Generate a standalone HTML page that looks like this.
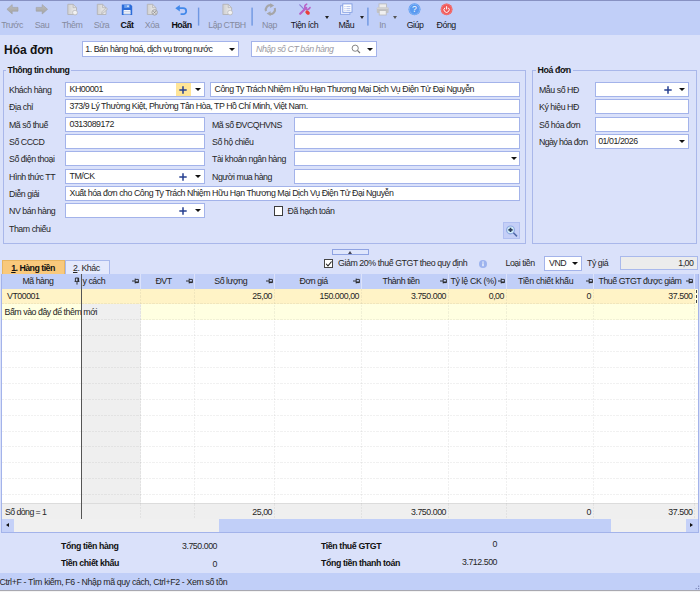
<!DOCTYPE html>
<html lang="vi">
<head>
<meta charset="utf-8">
<title>Hóa đơn</title>
<style>
*{box-sizing:border-box;margin:0;padding:0}
html,body{width:700px;height:592px;overflow:hidden}
body{position:relative;background:#dae1fa;font-family:"Liberation Sans",sans-serif;font-size:8.8px;letter-spacing:-0.46px;color:#262626;line-height:10px}
.a{position:absolute;white-space:nowrap}
.tb{position:absolute;left:0;top:0;width:700px;height:35px;background:#c1cff8}
.tb .l{position:absolute;top:20px;height:10px;width:50px;margin-left:-25px;text-align:center;white-space:nowrap}
.tb .d{color:#858a9e}
.tb .k{color:#15151c}
.tb .e{color:#0c0c10;font-weight:bold;letter-spacing:-0.45px}
.ar{position:absolute;width:0;height:0;border-left:2.5px solid transparent;border-right:2.5px solid transparent;border-top:3px solid #222}
.in{position:absolute;background:#fff;border:1px solid #a3b3ea;height:15px;line-height:13px;padding-left:3.5px;white-space:nowrap;overflow:hidden}
.lb{position:absolute;white-space:nowrap;height:10px;line-height:10px}
.gb{position:absolute;border:1px solid #a9b7ea}
.gt{position:absolute;top:-6px;left:3px;background:#dae1fa;padding:0 2px;font-weight:bold;letter-spacing:-0.4px;white-space:nowrap;color:#111}
.dd{position:absolute;width:0;height:0;border-left:3px solid transparent;border-right:3px solid transparent;border-top:3px solid #111}
.cb{position:absolute;width:9.5px;height:9.5px;border:1px solid #3c3c3c;background:#fff}
.b{font-weight:bold;letter-spacing:-0.4px;color:#111}
.r{text-align:right}
.hd{position:absolute;top:274px;height:14px;line-height:13px;text-align:center;white-space:nowrap;border-right:1px solid #dfe5fb;color:#222}
.c{position:absolute;height:15px;line-height:15px;white-space:nowrap;text-align:right}
</style>
</head>
<body>

<div class="tb">
<div class="a" style="left:0;top:0;width:700px;height:1px;background:#8791c2"></div>
<span class="l d" style="left:12px">Trước</span>
<span class="l d" style="left:42px">Sau</span>
<span class="l d" style="left:72px">Thêm</span>
<span class="l d" style="left:101.5px">Sửa</span>
<span class="l e" style="left:127px">Cất</span>
<span class="l d" style="left:152px">Xóa</span>
<span class="l e" style="left:181.5px">Hoãn</span>
<span class="l d" style="left:227px">Lập CTBH</span>
<span class="l d" style="left:269.5px">Nạp</span>
<span class="l k" style="left:304.5px">Tiện ích</span>
<span class="l k" style="left:346.3px">Mẫu</span>
<span class="l d" style="left:382.5px">In</span>
<span class="l k" style="left:415px">Giúp</span>
<span class="l k" style="left:446.2px">Đóng</span>
<span class="ar" style="left:324.6px;top:16px;border-top-color:#222"></span>
<span class="ar" style="left:360.1px;top:16px;border-top-color:#222"></span>
<span class="ar" style="left:392.9px;top:16px;border-top-color:#555"></span>
<svg class="a" style="left:0;top:0" width="700" height="35" viewBox="0 0 700 35"><defs><linearGradient id="ga" x1="0" y1="0" x2="0" y2="1"><stop offset="0" stop-color="#bdbdbd"/><stop offset="1" stop-color="#a3a3a3"/></linearGradient><linearGradient id="gd" x1="0" y1="0" x2="1" y2="0"><stop offset="0" stop-color="#cfcfd0"/><stop offset="1" stop-color="#f0f0f0"/></linearGradient></defs><polygon points="6.9,9.3 12.2,4.6 12.2,7.4 18,7.4 18,11.2 12.2,11.2 12.2,14" fill="url(#ga)" stroke="#a0a0a0" stroke-width="0.6"/><polygon points="47.6,9.3 42.2,4.6 42.2,7.4 36.2,7.4 36.2,11.2 42.2,11.2 42.2,14" fill="url(#ga)" stroke="#a0a0a0" stroke-width="0.6"/><path d="M67.8,4.3 h5.3 l3.4,3.4 v6.8 h-8.7 z" fill="url(#gd)" stroke="#b3b3b6" stroke-width="0.9"/><path d="M73.1,4.3 v3.4 h3.4" fill="none" stroke="#b3b3b6" stroke-width="0.8"/><circle cx="75" cy="12.6" r="2.4" fill="#f2f2f2" stroke="#b9b9bc" stroke-width="0.8"/><path d="M97.3,4.3 h5.3 l3.4,3.4 v6.8 h-8.7 z" fill="url(#gd)" stroke="#b3b3b6" stroke-width="0.9"/><path d="M102.6,4.3 v3.4 h3.4" fill="none" stroke="#b3b3b6" stroke-width="0.8"/><path d="M101.5,13.6 l0.6,-2 l4,-4 l1.4,1.4 l-4,4 z" fill="#dcdcdc" stroke="#b0b0b3" stroke-width="0.7"/><path d="M121.8,4.4 h8.8 l1.6,1.6 v9 h-10.4 z" fill="#2c6cd8"/><rect x="124.2" y="4.9" width="5.4" height="3" fill="#6fa2ee"/><rect x="127.4" y="5.4" width="1.2" height="1.6" fill="#fff"/><rect x="123.6" y="10" width="6.9" height="4.4" fill="#f4f7ff"/><rect x="123.6" y="11.4" width="6.9" height="0.8" fill="#b9c6dc"/><rect x="123.6" y="13" width="6.9" height="0.7" fill="#c9d4e6"/><path d="M147.3,4.3 h5.3 l3.4,3.4 v6.8 h-8.7 z" fill="url(#gd)" stroke="#b3b3b6" stroke-width="0.9"/><path d="M152.60000000000002,4.3 v3.4 h3.4" fill="none" stroke="#b3b3b6" stroke-width="0.8"/><circle cx="154.6" cy="12.4" r="2.7" fill="#dedede" stroke="#9a9a9e" stroke-width="0.9"/><path d="M153.4,11.2 l2.4,2.4 M155.8,11.2 l-2.4,2.4" stroke="#8c8c90" stroke-width="0.9"/><path d="M179,8.2 H183.2 a3,3 0 0 1 0,6 H180.6" fill="none" stroke="#4289ea" stroke-width="1.8"/><polygon points="175.3,8.2 179.8,5 179.8,11.4" fill="#4289ea"/><path d="M222.9,4.3 h5.3 l3.4,3.4 v6.8 h-8.7 z" fill="url(#gd)" stroke="#b3b3b6" stroke-width="0.9"/><path d="M228.20000000000002,4.3 v3.4 h3.4" fill="none" stroke="#b3b3b6" stroke-width="0.8"/><circle cx="230.1" cy="12.6" r="2.4" fill="#f2f2f2" stroke="#b9b9bc" stroke-width="0.8"/><g fill="none" stroke="#a6a6a8" stroke-width="2.1"><path d="M266,11.2 a4.6,4.6 0 0 1 5.2,-6"/><path d="M274.8,8 a4.6,4.6 0 0 1 -5.2,6"/></g><polygon points="270.2,3.2 274.2,5.6 270.2,8" fill="#a6a6a8"/><polygon points="270.6,16 266.6,13.6 270.6,11.2" fill="#a6a6a8"/><g stroke-linecap="round" fill="none"><path d="M299.8,4.8 L304.6,9.8" stroke="#8f7fd8" stroke-width="1.2"/><path d="M300.2,13.8 L306.2,7.8" stroke="#b862c8" stroke-width="2.2"/><path d="M306.6,4.2 a2.7,2.7 0 1 0 3.4,3.4" stroke="#b862c8" stroke-width="1.7"/></g><ellipse cx="307.6" cy="12.6" rx="2.5" ry="1.8" transform="rotate(40 307.6 12.6)" fill="#ea3f3a"/><rect x="340.5" y="5.8" width="9.4" height="8.6" fill="#e6ecff" stroke="#8ea6e6" stroke-width="0.9"/><rect x="342.8" y="3.9" width="9.2" height="8.4" fill="#fff" stroke="#7f9be0" stroke-width="0.9"/><path d="M344.4,6.6 h1.1 M346.4,6.6 h4 M344.4,8.6 h1.1 M346.4,8.6 h4 M344.4,10.4 h1.1 M346.4,10.4 h4" stroke="#a3b6ea" stroke-width="0.8"/><rect x="379" y="3.9" width="7.4" height="4.4" fill="#ececec" stroke="#b8b8ba" stroke-width="0.8"/><rect x="376.8" y="7.4" width="11.8" height="5.6" rx="1" fill="#c2c2c4"/><rect x="376.8" y="7.4" width="11.8" height="1.6" rx="0.8" fill="#d2d2d4"/><rect x="379.2" y="10.6" width="7" height="4.4" fill="#f0f0f0" stroke="#b8b8ba" stroke-width="0.8"/><circle cx="414.5" cy="9.3" r="6" fill="#5a9af0"/><circle cx="414.5" cy="9.3" r="5.1" fill="none" stroke="#86b6f6" stroke-width="0.9"/><text x="414.5" y="12.3" font-family="Liberation Sans, sans-serif" font-size="8.6" fill="#fff" text-anchor="middle" letter-spacing="0">?</text><circle cx="446.6" cy="9.3" r="5.9" fill="#f05a5a"/><circle cx="446.6" cy="9.3" r="5.1" fill="none" stroke="#f47c7c" stroke-width="0.8"/><path d="M444.9,7.8 a2.6,2.6 0 1 0 3.4,0" fill="none" stroke="#fff" stroke-width="1"/><path d="M446.6,6.2 v3.2" stroke="#fff" stroke-width="1"/><rect x="197.9" y="7.6" width="1.4" height="18" fill="#6f97e2"/><rect x="251.4" y="7.6" width="1.4" height="18" fill="#6f97e2"/><rect x="367.2" y="7.6" width="1.4" height="18" fill="#6f97e2"/></svg>
</div>
<div class="a" style="left:4px;top:40.5px;font-size:12px;font-weight:bold;letter-spacing:0;line-height:18px;color:#111">Hóa đơn</div>
<div class="in" style="left:82px;top:41px;width:157px;height:16px;line-height:14px;padding-left:2.3px">1. Bán hàng hoá, dịch vụ trong nước</div>
<span class="dd" style="left:228.5px;top:47.5px"></span>
<div class="in" style="left:251px;top:41px;width:126px;height:16px;line-height:14px;color:#9a9aa3;font-style:italic;padding-left:4px">Nhập số CT bán hàng</div>
<svg class="a" style="left:350px;top:43px" width="12" height="12" viewBox="0 0 12 12"><circle cx="5.2" cy="5.2" r="3.1" fill="none" stroke="#777" stroke-width="0.9"/><path d="M7.5,7.5 L10,10" stroke="#777" stroke-width="1.1"/></svg>
<span class="dd" style="left:367px;top:47.5px"></span>
<div class="gb" style="left:3px;top:70px;width:523px;height:174px"><span class="gt" style="left:1.5px;letter-spacing:-0.47px">Thông tin chung</span></div>
<div class="gb" style="left:532px;top:70px;width:165px;height:174px"><span class="gt" style="left:2.5px">Hoá đơn</span></div>
<span class="lb" style="left:9px;top:84.5px">Khách hàng</span>
<div class="in" style="left:65px;top:82px;width:140px">KH00001</div>
<div class="a" style="left:176px;top:83px;width:14.5px;height:13px;background:#ffe597"></div>
<svg class="a" style="left:179.3px;top:85.5px" width="8" height="8" viewBox="0 0 8 8"><path d="M0.3,4 h7.4 M4,0.3 v7.4" stroke="#263f90" stroke-width="1.5" fill="none"/></svg>
<span class="dd" style="left:194.7px;top:88px"></span>
<div class="in" style="left:210px;top:82px;width:310px">Công Ty Trách Nhiệm Hữu Hạn Thương Mại Dịch Vụ Điện Tử Đại Nguyễn</div>
<span class="lb" style="left:9px;top:101.5px">Địa chỉ</span>
<div class="in" style="left:65px;top:99px;width:455px;letter-spacing:-0.49px">373/9 Lý Thường Kiệt, Phường Tân Hòa, TP Hồ Chí Minh, Việt Nam.</div>
<span class="lb" style="left:9px;top:119.5px">Mã số thuế</span>
<div class="in" style="left:65px;top:117px;width:140px">0313089172</div>
<span class="lb" style="left:212px;top:119.5px">Mã số ĐVCQHVNS</span>
<div class="in" style="left:294px;top:117px;width:226px"></div>
<span class="lb" style="left:9px;top:136.5px">Số CCCD</span>
<div class="in" style="left:65px;top:134px;width:140px"></div>
<span class="lb" style="left:212px;top:136.5px">Số hộ chiếu</span>
<div class="in" style="left:294px;top:134px;width:226px"></div>
<span class="lb" style="left:9px;top:153.5px">Số điện thoại</span>
<div class="in" style="left:65px;top:151px;width:140px"></div>
<span class="lb" style="left:212px;top:153.5px">Tài khoản ngân hàng</span>
<div class="in" style="left:294px;top:151px;width:226px"></div>
<span class="dd" style="left:511px;top:157px"></span>
<span class="lb" style="left:9px;top:171.5px">Hình thức TT</span>
<div class="in" style="left:65px;top:169px;width:140px">TM/CK</div>
<svg class="a" style="left:179.3px;top:172.5px" width="8" height="8" viewBox="0 0 8 8"><path d="M0.3,4 h7.4 M4,0.3 v7.4" stroke="#263f90" stroke-width="1.5" fill="none"/></svg>
<span class="dd" style="left:194.7px;top:175px"></span>
<span class="lb" style="left:212px;top:171.5px">Người mua hàng</span>
<div class="in" style="left:294px;top:169px;width:226px"></div>
<span class="lb" style="left:9px;top:188.5px">Diễn giải</span>
<div class="in" style="left:65px;top:186px;width:455px">Xuất hóa đơn cho Công Ty Trách Nhiệm Hữu Hạn Thương Mại Dịch Vụ Điện Tử Đại Nguyễn</div>
<span class="lb" style="left:9px;top:205.5px">NV bán hàng</span>
<div class="in" style="left:65px;top:203px;width:140px"></div>
<svg class="a" style="left:179.3px;top:206.5px" width="8" height="8" viewBox="0 0 8 8"><path d="M0.3,4 h7.4 M4,0.3 v7.4" stroke="#263f90" stroke-width="1.5" fill="none"/></svg>
<span class="dd" style="left:194.7px;top:209px"></span>
<span class="cb" style="left:273.7px;top:206.3px"></span>
<span class="lb" style="left:287.5px;top:206px">Đã hạch toán</span>
<span class="lb" style="left:9px;top:223.5px">Tham chiếu</span>
<div class="a" style="left:503px;top:222px;width:17px;height:17px;background:#c5cff7;border:1px solid #b1bff1"></div>
<svg class="a" style="left:505px;top:223.5px" width="13" height="13" viewBox="0 0 13 13"><circle cx="5.5" cy="5.9" r="3.9" fill="#d4f0fa" stroke="#8ea8e2" stroke-width="1.2"/><path d="M3.4,5.9 h4.2 M5.5,3.8 v4.2" stroke="#2a3a58" stroke-width="1.7"/><path d="M8.4,8.8 L12,12.4" stroke="#5068a8" stroke-width="1.5"/></svg>
<span class="lb" style="left:539px;top:84.5px">Mẫu số HĐ</span>
<div class="in" style="left:595px;top:82px;width:94px"></div>
<svg class="a" style="left:664px;top:85.5px" width="8" height="8" viewBox="0 0 8 8"><path d="M0.3,4 h7.4 M4,0.3 v7.4" stroke="#263f90" stroke-width="1.5" fill="none"/></svg>
<span class="dd" style="left:679px;top:88px"></span>
<span class="lb" style="left:539px;top:101.5px">Ký hiệu HĐ</span>
<div class="in" style="left:595px;top:99px;width:94px"></div>
<span class="lb" style="left:539px;top:119.5px">Số hóa đơn</span>
<div class="in" style="left:595px;top:117px;width:94px"></div>
<span class="lb" style="left:539px;top:136.5px;letter-spacing:-0.6px">Ngày hóa đơn</span>
<div class="in" style="left:595px;top:134px;width:94px;padding-left:2.2px">01/01/2026</div>
<span class="dd" style="left:679px;top:140px"></span>
<div class="a" style="left:332px;top:249px;width:36.5px;height:6px;border:1px solid #8fa3e2;background:#dfe6fc"></div>
<span class="a" style="left:347.5px;top:250.5px;width:0;height:0;border-left:2.5px solid transparent;border-right:2.5px solid transparent;border-bottom:3px solid #445"></span>
<div class="a" style="left:2px;top:260px;width:62.5px;height:14px;background:#f9c97c;border:1px solid #e8b560;border-bottom:0"></div>
<span class="lb b" style="left:11.2px;top:262.5px;letter-spacing:-0.52px"><span style="text-decoration:underline">1</span>. Hàng tiền</span>
<div class="a" style="left:64.5px;top:260px;width:45px;height:14px;background:#e4e9fc;border:1px solid #a9b9ec;border-bottom:0"></div>
<span class="lb" style="left:73px;top:262.5px"><span style="text-decoration:underline">2</span>. Khác</span>
<span class="cb" style="left:323.6px;top:258.5px;border-color:#444"></span>
<svg class="a" style="left:323.6px;top:258.5px" width="9.5" height="9.5" viewBox="0 0 10 10"><path d="M2.2,5 L4.2,7.2 L8,2.6" fill="none" stroke="#222" stroke-width="1.1"/></svg>
<span class="lb" style="left:338px;top:258px;letter-spacing:-0.42px">Giảm 20% thuế GTGT theo quy định</span>
<svg class="a" style="left:478px;top:259px" width="10" height="10" viewBox="0 0 10 10"><circle cx="5" cy="5" r="4" fill="#9db3ee"/><rect x="4.4" y="4.3" width="1.2" height="2.9" fill="#fff"/><rect x="4.4" y="2.5" width="1.2" height="1.2" fill="#fff"/></svg>
<span class="lb" style="left:505.5px;top:258px">Loại tiền</span>
<div class="in" style="left:544px;top:255.5px;width:38px;height:15px;padding-left:4px">VND</div>
<span class="dd" style="left:571.5px;top:261.5px"></span>
<span class="lb" style="left:587px;top:258px">Tỷ giá</span>
<div class="in r" style="left:619.5px;top:255.5px;width:78px;height:14.5px;background:#ececec;padding-right:3px;border-color:#a9b9ec">1,00</div>
<div class="a" style="left:1px;top:274px;width:698px;height:259px;background:#fff;border:1px solid #a3b3ea;border-top:0"></div>
<div class="a" style="left:2px;top:274px;width:696px;height:15px;background:#c1cff8"></div>
<div class="a" style="left:2px;top:289px;width:696px;height:15px;background:#fff3c6"></div>
<div class="a" style="left:2px;top:303.8px;width:696px;height:15.9px;background:#ffffe1"></div>
<div class="a" style="left:81.5px;top:303.8px;width:59.0px;height:199.2px;background:#efefef"></div>
<div class="a" style="left:2px;top:503px;width:696px;height:16px;background:#efefef;border-top:1px solid #dcdcdc"></div>
<div class="a" style="left:2px;top:303.3px;width:696px;height:1px;background:repeating-linear-gradient(90deg,rgba(90,90,90,.085) 0 2.2px,transparent 2.2px 3.2px)"></div>
<div class="a" style="left:2px;top:319.2px;width:696px;height:1px;background:repeating-linear-gradient(90deg,rgba(90,90,90,.085) 0 2.2px,transparent 2.2px 3.2px)"></div>
<div class="a" style="left:2px;top:335.1px;width:696px;height:1px;background:repeating-linear-gradient(90deg,rgba(90,90,90,.085) 0 2.2px,transparent 2.2px 3.2px)"></div>
<div class="a" style="left:2px;top:351.0px;width:696px;height:1px;background:repeating-linear-gradient(90deg,rgba(90,90,90,.085) 0 2.2px,transparent 2.2px 3.2px)"></div>
<div class="a" style="left:2px;top:366.90000000000003px;width:696px;height:1px;background:repeating-linear-gradient(90deg,rgba(90,90,90,.085) 0 2.2px,transparent 2.2px 3.2px)"></div>
<div class="a" style="left:2px;top:382.8px;width:696px;height:1px;background:repeating-linear-gradient(90deg,rgba(90,90,90,.085) 0 2.2px,transparent 2.2px 3.2px)"></div>
<div class="a" style="left:2px;top:398.70000000000005px;width:696px;height:1px;background:repeating-linear-gradient(90deg,rgba(90,90,90,.085) 0 2.2px,transparent 2.2px 3.2px)"></div>
<div class="a" style="left:2px;top:414.6px;width:696px;height:1px;background:repeating-linear-gradient(90deg,rgba(90,90,90,.085) 0 2.2px,transparent 2.2px 3.2px)"></div>
<div class="a" style="left:2px;top:430.5px;width:696px;height:1px;background:repeating-linear-gradient(90deg,rgba(90,90,90,.085) 0 2.2px,transparent 2.2px 3.2px)"></div>
<div class="a" style="left:2px;top:446.4px;width:696px;height:1px;background:repeating-linear-gradient(90deg,rgba(90,90,90,.085) 0 2.2px,transparent 2.2px 3.2px)"></div>
<div class="a" style="left:2px;top:462.3px;width:696px;height:1px;background:repeating-linear-gradient(90deg,rgba(90,90,90,.085) 0 2.2px,transparent 2.2px 3.2px)"></div>
<div class="a" style="left:2px;top:478.20000000000005px;width:696px;height:1px;background:repeating-linear-gradient(90deg,rgba(90,90,90,.085) 0 2.2px,transparent 2.2px 3.2px)"></div>
<div class="a" style="left:2px;top:494.1px;width:696px;height:1px;background:repeating-linear-gradient(90deg,rgba(90,90,90,.085) 0 2.2px,transparent 2.2px 3.2px)"></div>
<div class="a" style="left:140.0px;top:289px;width:1px;height:230px;background:repeating-linear-gradient(180deg,rgba(90,90,90,.085) 0 2.2px,transparent 2.2px 3.2px)"></div>
<div class="a" style="left:194.0px;top:289px;width:1px;height:230px;background:repeating-linear-gradient(180deg,rgba(90,90,90,.085) 0 2.2px,transparent 2.2px 3.2px)"></div>
<div class="a" style="left:274.0px;top:289px;width:1px;height:230px;background:repeating-linear-gradient(180deg,rgba(90,90,90,.085) 0 2.2px,transparent 2.2px 3.2px)"></div>
<div class="a" style="left:360.7px;top:289px;width:1px;height:230px;background:repeating-linear-gradient(180deg,rgba(90,90,90,.085) 0 2.2px,transparent 2.2px 3.2px)"></div>
<div class="a" style="left:447.8px;top:289px;width:1px;height:230px;background:repeating-linear-gradient(180deg,rgba(90,90,90,.085) 0 2.2px,transparent 2.2px 3.2px)"></div>
<div class="a" style="left:505.9px;top:289px;width:1px;height:230px;background:repeating-linear-gradient(180deg,rgba(90,90,90,.085) 0 2.2px,transparent 2.2px 3.2px)"></div>
<div class="a" style="left:593.2px;top:289px;width:1px;height:230px;background:repeating-linear-gradient(180deg,rgba(90,90,90,.085) 0 2.2px,transparent 2.2px 3.2px)"></div>
<div class="a" style="left:694.0px;top:289px;width:1px;height:230px;background:repeating-linear-gradient(180deg,rgba(90,90,90,.085) 0 2.2px,transparent 2.2px 3.2px)"></div>
<div class="a" style="left:139.8px;top:274px;width:1.4px;height:15px;background:#dbe2fb"></div>
<div class="a" style="left:193.8px;top:274px;width:1.4px;height:15px;background:#dbe2fb"></div>
<div class="a" style="left:273.8px;top:274px;width:1.4px;height:15px;background:#dbe2fb"></div>
<div class="a" style="left:360.5px;top:274px;width:1.4px;height:15px;background:#dbe2fb"></div>
<div class="a" style="left:447.6px;top:274px;width:1.4px;height:15px;background:#dbe2fb"></div>
<div class="a" style="left:505.7px;top:274px;width:1.4px;height:15px;background:#dbe2fb"></div>
<div class="a" style="left:593.0px;top:274px;width:1.4px;height:15px;background:#dbe2fb"></div>
<div class="a" style="left:693.8px;top:274px;width:1.4px;height:15px;background:#dbe2fb"></div>
<div class="a" style="left:81px;top:274px;width:1px;height:245px;background:#555"></div>
<span class="lb" style="left:-2.1000000000000014px;width:80px;text-align:center;top:276px;color:#222">Mã hàng</span>
<svg class="a" style="left:74px;top:277px" width="6" height="8" viewBox="0 0 6 8"><path d="M3,4.6 v3" stroke="#222" stroke-width="0.9"/><path d="M0.6,4.4 h4.8 M1.4,4.4 v-3.4 h3.2 v3.4" fill="none" stroke="#222" stroke-width="0.9"/><path d="M4.1,1 v3.4" stroke="#222" stroke-width="1.2"/></svg>
<span class="lb" style="left:82.5px;top:276px;color:#222">y cách</span>
<svg class="a" style="left:132.4px;top:278px" width="7" height="6" viewBox="0 0 7 6"><path d="M0,3 h3" stroke="#222" stroke-width="0.9"/><path d="M3.2,0.6 v4.8 M3.2,1.4 h3.2 v3.2 h-3.2" fill="none" stroke="#222" stroke-width="0.9"/><path d="M3.2,4.1 h3.2" stroke="#222" stroke-width="1.2"/></svg>
<span class="lb" style="left:123.5px;width:80px;text-align:center;top:276px;color:#222">ĐVT</span>
<svg class="a" style="left:186.4px;top:278px" width="7" height="6" viewBox="0 0 7 6"><path d="M0,3 h3" stroke="#222" stroke-width="0.9"/><path d="M3.2,0.6 v4.8 M3.2,1.4 h3.2 v3.2 h-3.2" fill="none" stroke="#222" stroke-width="0.9"/><path d="M3.2,4.1 h3.2" stroke="#222" stroke-width="1.2"/></svg>
<span class="lb" style="left:190.7px;width:80px;text-align:center;top:276px;color:#222">Số lượng</span>
<svg class="a" style="left:266.4px;top:278px" width="7" height="6" viewBox="0 0 7 6"><path d="M0,3 h3" stroke="#222" stroke-width="0.9"/><path d="M3.2,0.6 v4.8 M3.2,1.4 h3.2 v3.2 h-3.2" fill="none" stroke="#222" stroke-width="0.9"/><path d="M3.2,4.1 h3.2" stroke="#222" stroke-width="1.2"/></svg>
<span class="lb" style="left:273.6px;width:80px;text-align:center;top:276px;color:#222">Đơn giá</span>
<svg class="a" style="left:353.09999999999997px;top:278px" width="7" height="6" viewBox="0 0 7 6"><path d="M0,3 h3" stroke="#222" stroke-width="0.9"/><path d="M3.2,0.6 v4.8 M3.2,1.4 h3.2 v3.2 h-3.2" fill="none" stroke="#222" stroke-width="0.9"/><path d="M3.2,4.1 h3.2" stroke="#222" stroke-width="1.2"/></svg>
<span class="lb" style="left:361px;width:80px;text-align:center;top:276px;color:#222">Thành tiền</span>
<svg class="a" style="left:440.2px;top:278px" width="7" height="6" viewBox="0 0 7 6"><path d="M0,3 h3" stroke="#222" stroke-width="0.9"/><path d="M3.2,0.6 v4.8 M3.2,1.4 h3.2 v3.2 h-3.2" fill="none" stroke="#222" stroke-width="0.9"/><path d="M3.2,4.1 h3.2" stroke="#222" stroke-width="1.2"/></svg>
<span class="lb" style="left:450.4px;top:276px;color:#222;letter-spacing:-0.33px">Tỷ lệ CK (%)</span>
<svg class="a" style="left:498.29999999999995px;top:278px" width="7" height="6" viewBox="0 0 7 6"><path d="M0,3 h3" stroke="#222" stroke-width="0.9"/><path d="M3.2,0.6 v4.8 M3.2,1.4 h3.2 v3.2 h-3.2" fill="none" stroke="#222" stroke-width="0.9"/><path d="M3.2,4.1 h3.2" stroke="#222" stroke-width="1.2"/></svg>
<span class="lb" style="left:505.70000000000005px;width:80px;text-align:center;top:276px;color:#222;letter-spacing:-0.28px">Tiền chiết khấu</span>
<svg class="a" style="left:585.6px;top:278px" width="7" height="6" viewBox="0 0 7 6"><path d="M0,3 h3" stroke="#222" stroke-width="0.9"/><path d="M3.2,0.6 v4.8 M3.2,1.4 h3.2 v3.2 h-3.2" fill="none" stroke="#222" stroke-width="0.9"/><path d="M3.2,4.1 h3.2" stroke="#222" stroke-width="1.2"/></svg>
<span class="lb" style="left:598.5px;top:276px;color:#222">Thuế GTGT được giảm</span>
<svg class="a" style="left:686.4px;top:278px" width="7" height="6" viewBox="0 0 7 6"><path d="M0,3 h3" stroke="#222" stroke-width="0.9"/><path d="M3.2,0.6 v4.8 M3.2,1.4 h3.2 v3.2 h-3.2" fill="none" stroke="#222" stroke-width="0.9"/><path d="M3.2,4.1 h3.2" stroke="#222" stroke-width="1.2"/></svg>
<span class="lb" style="left:7px;top:291.3px">VT00001</span>
<span class="lb r" style="left:172px;width:100px;top:291.3px">25,00</span>
<span class="lb r" style="left:259px;width:100px;top:291.3px">150.000,00</span>
<span class="lb r" style="left:346px;width:100px;top:291.3px">3.750.000</span>
<span class="lb r" style="left:404px;width:100px;top:291.3px">0,00</span>
<span class="lb r" style="left:491px;width:100px;top:291.3px">0</span>
<span class="lb r" style="left:592.5px;width:100px;top:291.3px">37.500</span>
<div class="a" style="left:694.5px;top:289px;width:3.5px;height:15px;background:#ffffe1"></div>
<div class="a" style="left:694.5px;top:274px;width:3.5px;height:15px;background:#b9c7f5"></div>
<div class="a" style="left:695.6px;top:290px;width:0;height:13px;border-left:1px dashed #444"></div>
<span class="lb" style="left:4.5px;top:307.1px">Bấm vào đây để thêm mới</span>
<span class="lb" style="left:5px;top:506.5px;letter-spacing:-0.58px">Số dòng = 1</span>
<span class="lb r" style="left:172px;width:100px;top:506.5px">25,00</span>
<span class="lb r" style="left:346px;width:100px;top:506.5px">3.750.000</span>
<span class="lb r" style="left:491px;width:100px;top:506.5px">0</span>
<span class="lb r" style="left:592.5px;width:100px;top:506.5px">37.500</span>
<div class="a" style="left:2px;top:519px;width:696px;height:13px;background:#f0f0f0"></div>
<div class="a" style="left:2px;top:519px;width:12px;height:13px;background:#c5d1f8"></div>
<div class="a" style="left:686px;top:519px;width:12px;height:13px;background:#c5d1f8"></div>
<div class="a" style="left:218.5px;top:519px;width:392.5px;height:13px;background:#c1cff8"></div>
<span class="a" style="left:6.4px;top:523.2px;width:0;height:0;border-top:2.7px solid transparent;border-bottom:2.7px solid transparent;border-right:3.5px solid #111"></span>
<span class="a" style="left:690.3px;top:523.2px;width:0;height:0;border-top:2.7px solid transparent;border-bottom:2.7px solid transparent;border-left:3.5px solid #111"></span>
<span class="lb b" style="left:61px;top:540.5px">Tổng tiền hàng</span>
<span class="lb r" style="left:117px;width:100px;top:541px">3.750.000</span>
<span class="lb b" style="left:61px;top:557.5px">Tiền chiết khấu</span>
<span class="lb r" style="left:117px;width:100px;top:559px">0</span>
<span class="lb b" style="left:321px;top:540.5px">Tiền thuế GTGT</span>
<span class="lb r" style="left:397px;width:100px;top:538.5px">0</span>
<span class="lb b" style="left:321px;top:557.5px">Tổng tiền thanh toán</span>
<span class="lb r" style="left:397px;width:100px;top:557px">3.712.500</span>
<div class="a" style="left:0;top:573px;width:700px;height:17px;background:#c1cff8"></div>
<span class="lb" style="left:-0.5px;top:577px;letter-spacing:-0.37px">Ctrl+F - Tìm kiếm, F6 - Nhập mã quy cách, Ctrl+F2 - Xem số tồn</span>
<div class="a" style="left:0;top:590px;width:700px;height:1px;background:#a8a8b0"></div>
<div class="a" style="left:0;top:591px;width:700px;height:1px;background:#f4f4f4"></div>
<svg class="a" style="left:692px;top:582px" width="8" height="8" viewBox="0 0 8 8"><g fill="#7a86b8"><rect x="6" y="6" width="1.2" height="1.2"/><rect x="6" y="3.6" width="1.2" height="1.2"/><rect x="3.6" y="6" width="1.2" height="1.2"/></g></svg>
</body>
</html>
